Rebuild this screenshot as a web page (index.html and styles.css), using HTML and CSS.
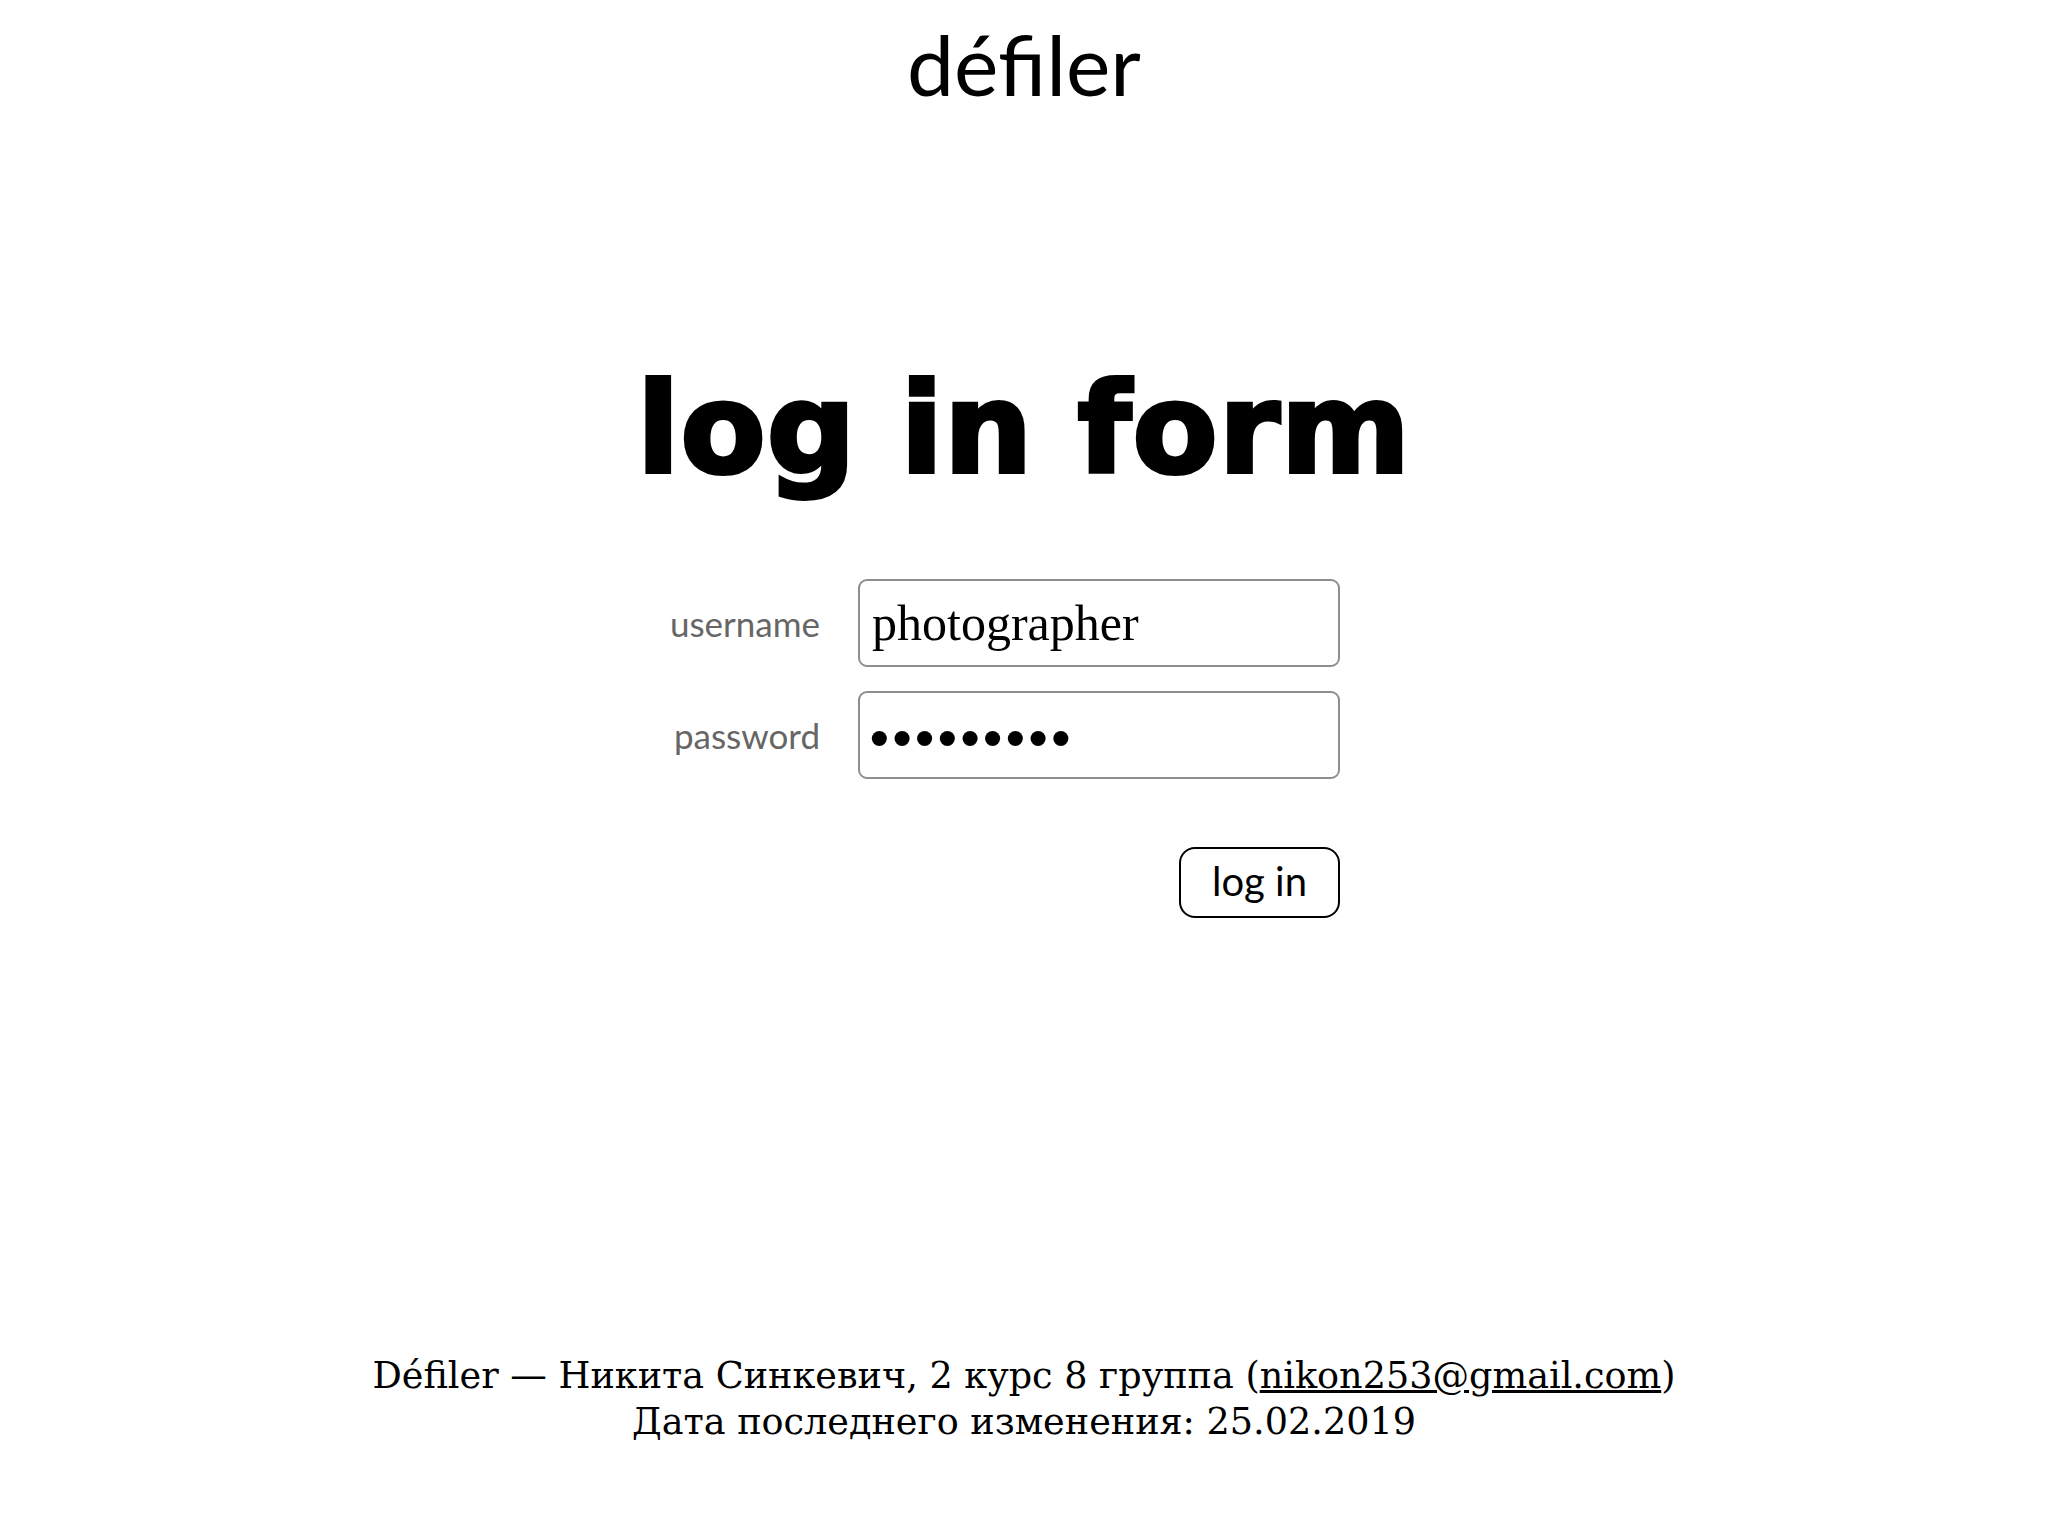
FILE: index.html
```html
<!DOCTYPE html>
<html lang="ru">
<head>
<meta charset="utf-8">
<title>défiler — log in</title>
<link rel="stylesheet" href="styles.css">
</head>
<body>
<header class="site-header">
  <div class="logo">défiler</div>
</header>
<main class="main">
  <h1 class="title">log in form</h1>
  <form class="login-form" onsubmit="return false">
    <label class="field-label" for="username">username</label>
    <input class="field-input" id="username" type="text" value="photographer">
    <label class="field-label" for="password">password</label>
    <input class="field-input field-password" id="password" type="password" value="123456789">
    <button class="submit-btn" type="submit">log in</button>
  </form>
</main>
<footer class="site-footer">
  <div class="footer-line">Défiler — Никита Синкевич, 2 курс 8 группа (<a class="footer-link" href="#">nikon253@gmail.com</a>)</div>
  <div class="footer-line">Дата последнего изменения: 25.02.2019</div>
</footer>
</body>
</html>
```

FILE: styles.css
```css
html, body {
  margin: 0;
  padding: 0;
  background: #fff;
  color: #000;
}
body {
  min-height: 1536px;
  display: flex;
  flex-direction: column;
  font-family: "Lato", "DejaVu Sans", sans-serif;
}
.site-header {
  display: flex;
  justify-content: center;
  padding-top: 14px;
}
.logo {
  font-size: 84px;
  line-height: 100px;
  font-weight: 400;
}
.main {
  flex: 1;
  display: flex;
  flex-direction: column;
  align-items: center;
}
.title {
  margin: 240px 0 0;
  font-family: "DejaVu Sans", sans-serif;
  font-size: 124px;
  line-height: 150px;
  font-weight: 700;
  -webkit-text-stroke: 4px #000;
  letter-spacing: 1px;
}
.login-form {
  align-self: stretch;
  display: grid;
  grid-template-columns: 820px 482px;
  column-gap: 38px;
  row-gap: 24px;
  margin-top: 75px;
}
.field-label {
  justify-self: end;
  align-self: center;
  font-size: 35px;
  color: #666;
}
.field-input {
  box-sizing: border-box;
  width: 482px;
  height: 88px;
  margin: 0;
  padding: 0 12px;
  border: 2px solid #8e8e8e;
  border-radius: 9px;
  font-family: "Liberation Serif", "Times New Roman", serif;
  font-size: 50px;
  color: #000;
  background: #fff;
  outline: none;
}
.field-password {
  padding: 10px 12px 0 4px;
  font-family: "DejaVu Sans", sans-serif;
  font-size: 52px;
  letter-spacing: -8px;
}
.submit-btn {
  grid-column: 2;
  justify-self: end;
  margin-top: 44px;
  box-sizing: border-box;
  width: 161px;
  height: 71px;
  border: 2px solid #000;
  border-radius: 16px;
  background: #fff;
  color: #000;
  font-family: "Lato", "DejaVu Sans", sans-serif;
  font-size: 40px;
  padding: 0 0 4px;
}
.site-footer {
  display: flex;
  flex-direction: column;
  align-items: center;
  padding-bottom: 91px;
  font-family: "DejaVu Serif", "Liberation Serif", serif;
  font-size: 36.6px;
  line-height: 46px;
}
.footer-link {
  color: #000;
  text-decoration: underline;
}
```
